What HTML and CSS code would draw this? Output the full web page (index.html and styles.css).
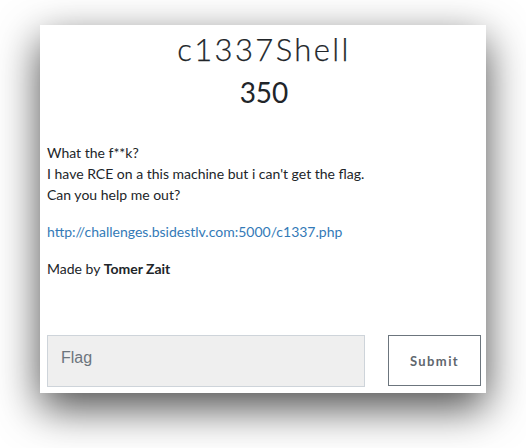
FILE: index.html
```html
<!DOCTYPE html>
<html>
<head>
<meta charset="utf-8">
<link rel="stylesheet" href="styles.css">
</head>
<body>
<div class="modal">
  <h1 class="title">c1337Shell</h1>
  <h2 class="points">350</h2>
  <div class="desc">
    <p>What the f**k?<br>I have RCE on a this machine but i can't get the flag.<br>Can you help me out?</p>
    <p><a href="#">http://challenges.bsidestlv.com:5000/c1337.php</a></p>
    <p>Made by <b>Tomer Zait</b></p>
  </div>
  <form class="submit-row">
    <input class="flag" type="text" placeholder="Flag">
    <button class="btn" type="button">Submit</button>
  </form>
</div>
</body>
</html>
```

FILE: styles.css
```css
html, body {
  margin: 0;
  padding: 0;
  background: #fff;
}
body {
  min-height: 448px;
  box-sizing: border-box;
  padding: 25px 0 0 40px;
  font-family: Lato, "Noto Sans", sans-serif;
  color: #212529;
}
.modal {
  width: 446px;
  box-sizing: border-box;
  padding: 6px 5px 6px 7px;
  background: #fff;
  box-shadow: 0 15px 40px rgba(0, 0, 0, 0.7);
}
.title {
  margin: 0;
  text-align: center;
  font-family: Lato, sans-serif;
  font-weight: 300;
  font-size: 31px;
  line-height: 36px;
  letter-spacing: 2.4px;
  -webkit-text-stroke: 0.25px #212529;
  color: #212529;
}
.points {
  margin: 8px 0 0;
  text-align: center;
  font-weight: 400;
  font-size: 28px;
  line-height: 34px;
  color: #212529;
}
.desc {
  margin-top: 33px;
  font-size: 14px;
  line-height: 21px;
}
.desc p {
  margin: 0 0 16px;
}
.desc p:last-child {
  margin-bottom: 0;
}
.desc a {
  color: #337ab7;
  text-decoration: none;
}
.desc b {
  font-weight: 700;
}
.submit-row {
  margin: 56px 0 0;
  display: flex;
  justify-content: space-between;
  align-items: flex-start;
}
.flag {
  width: 318px;
  height: 52px;
  box-sizing: border-box;
  margin: 0;
  padding: 0 13px 6px;
  border: 1px solid #ced4da;
  background: #efefef;
  font-family: "Liberation Sans", Arial, sans-serif;
  font-size: 16px;
  color: #495057;
  outline: none;
}
.flag::placeholder {
  color: #6c757d;
}
.btn {
  width: 93px;
  height: 51px;
  box-sizing: border-box;
  margin: 0;
  border: 1px solid #6c757d;
  background: #fff;
  color: #5f676e;
  font-family: Lato, sans-serif;
  font-weight: 700;
  font-size: 13px;
  letter-spacing: 1.4px;
  padding: 0;
}
```
